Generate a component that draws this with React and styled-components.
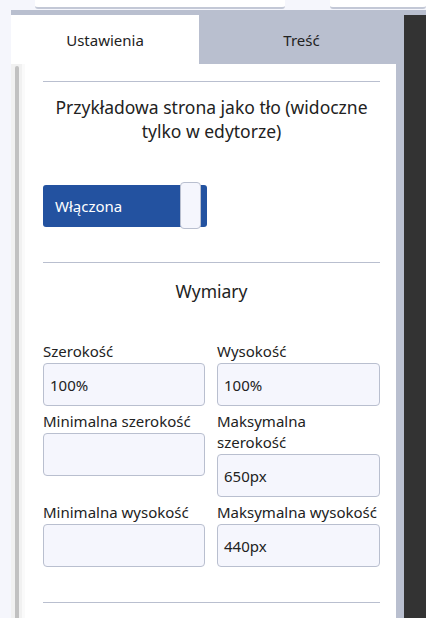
import styled, { createGlobalStyle } from "styled-components";

const GlobalStyle = createGlobalStyle`
  * { box-sizing: border-box; }
  body {
    margin: 0;
    background: #f5f6fc;
    font-family: "Noto Sans", "Open Sans", sans-serif;
    color: #222;
    overflow: hidden;
  }
`;

const Page = styled.div`
  height: 618px;
  display: flex;
  flex-direction: column;
`;

const TopBar = styled.div`
  height: 10px;
  display: flex;
  gap: 45px;
  padding-left: 35px;
`;

const TopField = styled.div`
  height: 9px;
  width: ${({ $w }) => $w};
  background: #fff;
  border-bottom: 2px solid #c3c8d6;
  border-radius: 0 0 3px 3px;
`;

const Shell = styled.div`
  flex: 1;
  margin-left: 11px;
  padding-top: 5px;
  background: #b9bfcf;
  display: flex;
  min-height: 0;
`;

const Sidebar = styled.div`
  width: 393px;
  display: flex;
  flex-direction: column;
`;

const Tabs = styled.div`
  display: flex;
  height: 49px;
`;

const Tab = styled.div`
  width: ${({ $w }) => $w};
  display: flex;
  align-items: center;
  justify-content: center;
  font-size: 15px;
  background: ${({ $active }) => ($active ? "#fff" : "transparent")};
  color: #222;
`;

const Body = styled.div`
  flex: 1;
  display: flex;
  padding-right: 8px;
  min-height: 0;
`;

const Track = styled.div`
  width: 14px;
  background: #f1f1f1;
  padding: 2px 3px 0 4px;
  border-right: 3px solid #fafafa;
`;

const Thumb = styled.div`
  height: 100%;
  background: #c1c1c1;
  border-radius: 4px 4px 0 0;
`;

const Content = styled.div`
  flex: 1;
  background: #fff;
  padding: 17px 16px 0 18px;
  overflow: hidden;
`;

const Divider = styled.hr`
  margin: 0;
  border: none;
  border-top: 1px solid #b9bfcf;
`;

const Heading = styled.h3`
  margin: ${({ $m }) => $m};
  font-size: 17.5px;
  font-weight: 400;
  line-height: 24px;
  text-align: center;
`;

const Toggle = styled.div`
  position: relative;
  width: 164px;
  height: 42px;
  margin: 42px 0 35px;
  background: #2352a0;
  border-radius: 3px;
  color: #fff;
  font-size: 15px;
  display: flex;
  align-items: center;
  padding-left: 12px;
`;

const Knob = styled.span`
  position: absolute;
  right: 6px;
  top: -3px;
  width: 21px;
  height: 47px;
  background: #f5f6fd;
  border: 1px solid #b9bfcf;
  border-radius: 4px;
`;

const Grid = styled.div`
  display: grid;
  grid-template-columns: 162px 163px;
  column-gap: 12px;
  row-gap: 5px;
  align-items: start;
  margin: 38px 0 35px;
`;

const Field = styled.label`
  display: flex;
  flex-direction: column;
`;

const Label = styled.span`
  font-size: 15px;
  line-height: 21px;
  white-space: pre-line;
`;

const Input = styled.div`
  height: 43px;
  background: #f5f6fd;
  border: 1px solid #b9bfcf;
  border-radius: 4px;
  font-size: 15px;
  display: flex;
  align-items: center;
  padding-left: 6px;
  margin-top: 1px;
`;

const Dark = styled.div`
  flex: 1;
  background: #333;
`;

const fields = [
  ["Szerokość", "100%"],
  ["Wysokość", "100%"],
  ["Minimalna szerokość", ""],
  ["Maksymalna\nszerokość", "650px"],
  ["Minimalna wysokość", ""],
  ["Maksymalna wysokość", "440px"],
];

export default function App() {
  return (
    <Page>
      <GlobalStyle />
      <TopBar>
        <TopField $w="250px" />
        <TopField $w="96px" />
      </TopBar>
      <Shell>
        <Sidebar>
          <Tabs>
            <Tab $w="188px" $active>Ustawienia</Tab>
            <Tab $w="205px">Treść</Tab>
          </Tabs>
          <Body>
            <Track>
              <Thumb />
            </Track>
            <Content>
              <Divider />
              <Heading $m="13px 0 0">
                Przykładowa strona jako tło (widoczne tylko w edytorze)
              </Heading>
              <Toggle>
                Włączona
                <Knob />
              </Toggle>
              <Divider />
              <Heading $m="16px 0 0">Wymiary</Heading>
              <Grid>
                {fields.map(([label, value]) => (
                  <Field key={label}>
                    <Label>{label}</Label>
                    <Input>{value}</Input>
                  </Field>
                ))}
              </Grid>
              <Divider />
            </Content>
          </Body>
        </Sidebar>
        <Dark />
      </Shell>
    </Page>
  );
}
